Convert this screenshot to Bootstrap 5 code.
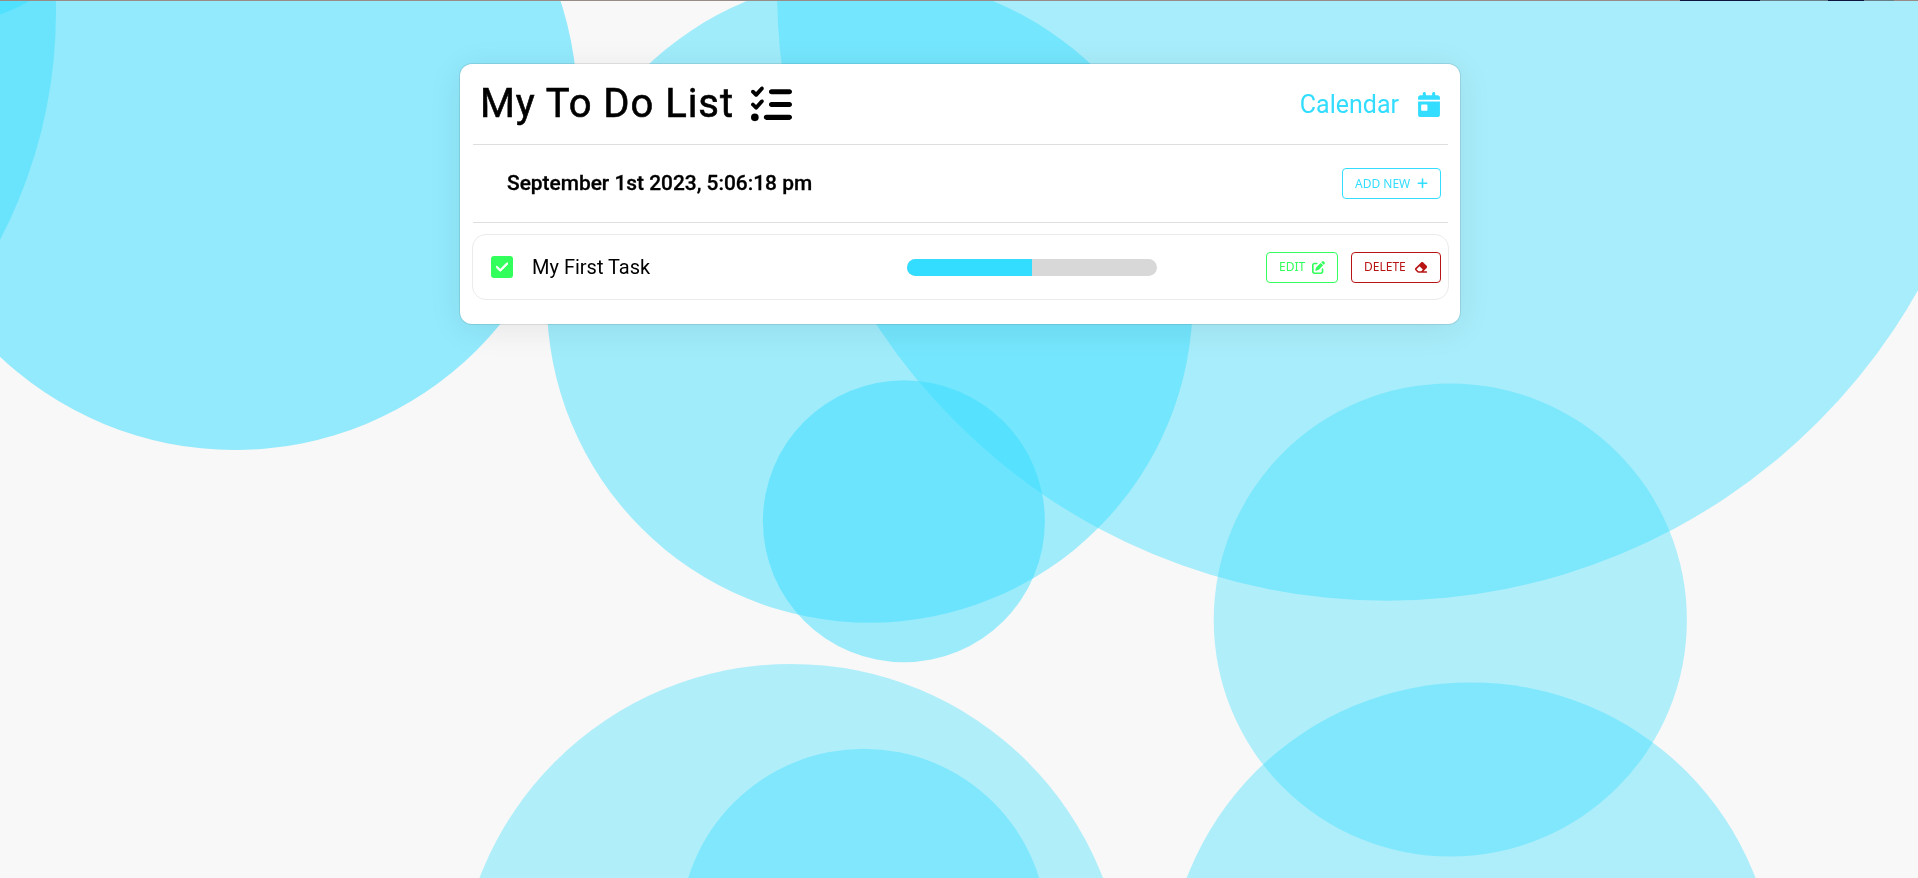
<!DOCTYPE html>
<html lang="en">
<head>
<meta charset="utf-8">
<meta name="viewport" content="width=device-width, initial-scale=1">
<title>My To Do List</title>
<link href="https://cdn.jsdelivr.net/npm/bootstrap@5.3.0/dist/css/bootstrap.min.css" rel="stylesheet">
<style>
  body { background: #f8f8f8; font-family: Roboto, sans-serif; color: #000; min-height: 100vh; overflow: hidden; padding-left: 2px; }
  .backdrop { position: fixed; inset: 0; z-index: -1; width: 1918px; height: 878px; }
  .todo-card { width: 1000px; margin-top: 64px; height: 260px; padding: 0 11px 0 12px; border: 0; border-radius: 12px;
    box-shadow: 0 0 0 1px rgba(16,22,26,.1), 0 5px 34px rgba(0,0,0,.08); }
  .head-row { height: 80px; padding: 0 9px 0 8px; }
  .rule { height: 1px; margin: 0 1px; background: #dedede; }
  .todo-title { font-size: 40px; font-weight: 400; letter-spacing: .95px; line-height: 1; gap: 17px; -webkit-text-stroke: .6px #000; }
  .cal-link { font-size: 25px; color: #33ddff; line-height: 1; gap: 19px; }
  .date-row { height: 77px; padding: 0 8px 0 35px; }
  .date-text { font-size: 20.9px; font-weight: 500; -webkit-text-stroke: .3px #000; }
  .task-row { height: 66px; margin-top: 11px; border: 1px solid #ebebeb; border-radius: 14px; padding: 0 7px 0 18px; }
  .task-name { width: 416px; font-size: 20px; gap: 19px; }
  .done-box { width: 22px; height: 22px; border-radius: 3px; background: #33ff5c; }
  .task-progress { width: 250px; height: 17px; border-radius: 9px; background: #d8d8d8; --bs-progress-bar-bg: #33ddff; }
  .act-btn { --bs-btn-font-size: 12px; --bs-btn-padding-x: 12px; --bs-btn-padding-y: 0; --bs-btn-border-radius: 4px;
    font-family: "Noto Sans", sans-serif; height: 31px; line-height: 1; white-space: nowrap; color: var(--tone); border-color: var(--tone); }
  .btn-pair { gap: 13px; }
  .tone-cyan { --tone: #33ddff; width: 99px; }
  .tone-green { --tone: #33ff5c; width: 72px; }
  .tone-red { --tone: #b81414; width: 90px; }
</style>
</head>
<body>
<svg class="backdrop" viewBox="0 0 1918 878" fill="#33ddff" aria-hidden="true">
  <circle cx="235" cy="107.5" r="342.5" fill-opacity=".52"/>
  <circle cx="-436" cy="12" r="492" fill-opacity=".41"/>
  <circle cx="-47" cy="-128" r="150" fill-opacity=".48"/>
  <circle cx="869.8" cy="299.7" r="323" fill-opacity=".447"/>
  <circle cx="1386.8" cy="-9" r="609.7" fill-opacity=".406"/>
  <circle cx="903.9" cy="521.2" r="141" fill-opacity=".468"/>
  <circle cx="1450.3" cy="620" r="236.6" fill-opacity=".365"/>
  <circle cx="1471.1" cy="987" r="304.6" fill-opacity=".376"/>
  <circle cx="791.2" cy="998" r="334.1" fill-opacity=".365"/>
  <circle cx="863.7" cy="932.4" r="183.7" fill-opacity=".386"/>
  <path fill="#998c86" d="M0 0h1918v1H0z"/>
  <path fill="#0d1440" d="M1680 0h80v1h-80zM1828 0h36v1h-36z"/>
  <path fill="#667f88" d="M1760 0h68v1h-68zM1864 0h30v1h-30z"/>
</svg>

<main class="card todo-card mx-auto">
  <header class="head-row d-flex align-items-center justify-content-between">
    <h1 class="todo-title d-flex align-items-center mb-0">
      <span>My To Do List</span>
      <svg width="41" height="41" viewBox="0 0 512 512" fill="currentColor"><path d="M152.1 38.2c9.9 8.9 10.7 24 1.8 33.9l-72 80c-4.4 4.9-10.6 7.8-17.2 7.9s-12.9-2.4-17.6-7L7 113C-2.3 103.6-2.3 88.4 7 79s24.6-9.4 33.9 0l22.1 22.1 55.1-61.2c8.9-9.9 24-10.7 33.9-1.8zm0 160c9.9 8.9 10.7 24 1.8 33.9l-72 80c-4.4 4.9-10.6 7.8-17.2 7.9s-12.9-2.4-17.6-7L7 273c-9.4-9.4-9.4-24.6 0-33.9s24.6-9.4 33.9 0l22.1 22.1 55.1-61.2c8.9-9.9 24-10.7 33.9-1.8zM224 96c0-17.7 14.3-32 32-32l224 0c17.7 0 32 14.3 32 32s-14.3 32-32 32l-224 0c-17.7 0-32-14.3-32-32zm0 160c0-17.7 14.3-32 32-32l224 0c17.7 0 32 14.3 32 32s-14.3 32-32 32l-224 0c-17.7 0-32-14.3-32-32zM160 416c0-17.7 14.3-32 32-32l288 0c17.7 0 32 14.3 32 32s-14.3 32-32 32l-288 0c-17.7 0-32-14.3-32-32zM48 368a48 48 0 1 1 0 96 48 48 0 1 1 0-96z"/></svg>
    </h1>
    <a href="#" class="cal-link d-flex align-items-center text-decoration-none">
      <span>Calendar</span>
      <svg width="22" height="25" viewBox="0 0 448 512" fill="currentColor"><path d="M128 0c17.7 0 32 14.3 32 32l0 32 128 0 0-32c0-17.7 14.3-32 32-32s32 14.3 32 32l0 32 48 0c26.5 0 48 21.5 48 48l0 48L0 160l0-48C0 85.5 21.5 64 48 64l48 0 0-32c0-17.7 14.3-32 32-32zM0 192l448 0 0 272c0 26.5-21.5 48-48 48L48 512c-26.5 0-48-21.5-48-48L0 192zm80 64c-8.8 0-16 7.2-16 16l0 96c0 8.8 7.2 16 16 16l96 0c8.8 0 16-7.2 16-16l0-96c0-8.8-7.2-16-16-16l-96 0z"/></svg>
    </a>
  </header>
  <div class="rule"></div>
  <section class="date-row d-flex align-items-center justify-content-between">
    <span class="date-text">September 1st 2023, 5:06:18 pm</span>
    <button type="button" class="btn act-btn tone-cyan d-flex align-items-center justify-content-between">
      <span>ADD NEW</span>
      <svg width="11" height="12.5" viewBox="0 0 448 512" fill="currentColor"><path d="M256 80c0-17.7-14.3-32-32-32s-32 14.3-32 32l0 144L48 224c-17.7 0-32 14.3-32 32s14.3 32 32 32l144 0 0 144c0 17.7 14.3 32 32 32s32-14.3 32-32l0-144 144 0c17.7 0 32-14.3 32-32s-14.3-32-32-32l-144 0 0-144z"/></svg>
    </button>
  </section>
  <div class="rule"></div>
  <section class="task-row d-flex align-items-center">
    <div class="task-name d-flex align-items-center">
      <span class="done-box d-flex align-items-center justify-content-center">
        <svg width="12" height="14" viewBox="0 0 448 512" fill="#fff"><path d="M438.6 105.4c12.5 12.5 12.5 32.8 0 45.3l-256 256c-12.5 12.5-32.8 12.5-45.3 0l-128-128c-12.5-12.5-12.5-32.8 0-45.3s32.8-12.5 45.3 0L160 338.7 393.4 105.4c12.5-12.5 32.8-12.5 45.3 0z" stroke="#fff" stroke-width="30"/></svg>
      </span>
      <span>My First Task</span>
    </div>
    <div class="progress task-progress">
      <div class="progress-bar" role="progressbar" style="width: 50%"></div>
    </div>
    <div class="btn-pair d-flex ms-auto">
      <button type="button" class="btn act-btn tone-green d-flex align-items-center justify-content-between">
        <span>EDIT</span>
        <svg width="13" height="13" viewBox="0 0 512 512" fill="currentColor"><path d="M471.6 21.7c-21.9-21.9-57.3-21.9-79.2 0L362.3 51.7l97.9 97.9 30.1-30.1c21.9-21.9 21.9-57.3 0-79.2L471.6 21.7zm-299.2 220c-6.1 6.1-10.8 13.6-13.5 21.9l-29.6 88.8c-2.9 8.6-.6 18.1 5.8 24.6s15.9 8.7 24.6 5.8l88.8-29.6c8.2-2.7 15.7-7.4 21.9-13.5L437.7 172.3 339.7 74.3 172.4 241.7zM96 64C43 64 0 107 0 160L0 416c0 53 43 96 96 96l256 0c53 0 96-43 96-96l0-96c0-17.7-14.3-32-32-32s-32 14.3-32 32l0 96c0 17.7-14.3 32-32 32L96 448c-17.7 0-32-14.3-32-32l0-256c0-17.7 14.3-32 32-32l96 0c17.7 0 32-14.3 32-32s-14.3-32-32-32L96 64z"/></svg>
      </button>
      <button type="button" class="btn act-btn tone-red d-flex align-items-center justify-content-between">
        <span>DELETE</span>
        <svg width="14" height="12.5" viewBox="0 0 576 512" fill="currentColor"><path d="M290.7 57.4L57.4 290.7c-25 25-25 65.5 0 90.5l80 80c12 12 28.3 18.7 45.3 18.7L288 480l9.4 0L512 480c17.7 0 32-14.3 32-32s-14.3-32-32-32l-124.1 0L518.6 285.3c25-25 25-65.5 0-90.5L381.3 57.4c-25-25-65.5-25-90.5 0zM297.4 416l-9.4 0-105.4 0-80-80L227.3 211.3 364.7 348.7 297.4 416z"/></svg>
      </button>
    </div>
  </section>
</main>
<script src="https://cdn.jsdelivr.net/npm/bootstrap@5.3.0/dist/js/bootstrap.bundle.min.js"></script>
</body>
</html>
